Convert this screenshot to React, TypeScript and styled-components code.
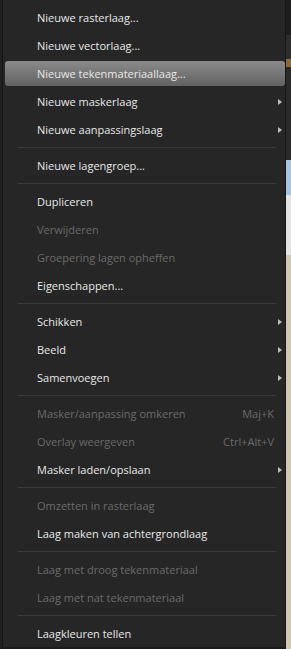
import styled, { createGlobalStyle } from "styled-components";

const Global = createGlobalStyle`
  html, body {
    margin: 0;
    padding: 0;
    background: #1b1b1b;
    overflow: hidden;
  }
`;

type Entry =
  | { kind: "item"; label: string; disabled?: boolean; sub?: boolean; shortcut?: string; active?: boolean }
  | { kind: "sep" };

const entries: Entry[] = [
  { kind: "item", label: "Nieuwe rasterlaag..." },
  { kind: "item", label: "Nieuwe vectorlaag..." },
  { kind: "item", label: "Nieuwe tekenmateriaallaag...", active: true },
  { kind: "item", label: "Nieuwe maskerlaag", sub: true },
  { kind: "item", label: "Nieuwe aanpassingslaag", sub: true },
  { kind: "sep" },
  { kind: "item", label: "Nieuwe lagengroep..." },
  { kind: "sep" },
  { kind: "item", label: "Dupliceren" },
  { kind: "item", label: "Verwijderen", disabled: true },
  { kind: "item", label: "Groepering lagen opheffen", disabled: true },
  { kind: "item", label: "Eigenschappen..." },
  { kind: "sep" },
  { kind: "item", label: "Schikken", sub: true },
  { kind: "item", label: "Beeld", sub: true },
  { kind: "item", label: "Samenvoegen", sub: true },
  { kind: "sep" },
  { kind: "item", label: "Masker/aanpassing omkeren", disabled: true, shortcut: "Maj+K" },
  { kind: "item", label: "Overlay weergeven", disabled: true, shortcut: "Ctrl+Alt+V" },
  { kind: "item", label: "Masker laden/opslaan", sub: true },
  { kind: "sep" },
  { kind: "item", label: "Omzetten in rasterlaag", disabled: true },
  { kind: "item", label: "Laag maken van achtergrondlaag" },
  { kind: "sep" },
  { kind: "item", label: "Laag met droog tekenmateriaal", disabled: true },
  { kind: "item", label: "Laag met nat tekenmateriaal", disabled: true },
  { kind: "sep" },
  { kind: "item", label: "Laagkleuren tellen" },
];

const Screen = styled.div`
  display: flex;
  width: 291px;
  height: 649px;
  background: #1b1b1b;
`;

const LeftEdge = styled.div`
  width: 2px;
  background: #202020;
`;

const Menu = styled.div`
  display: flex;
  flex-direction: column;
  width: 284px;
  height: 647px;
  padding-top: 3px;
  box-sizing: border-box;
  background: #262626;
  border-left: 1px solid #161616;
  border-right: 1px solid #161616;
  font-family: "Open Sans", "Noto Sans", sans-serif;
  font-size: 11px;
`;

const Row = styled.div<{ $disabled?: boolean; $active?: boolean }>`
  display: flex;
  align-items: center;
  flex-shrink: 0;
  height: 25px;
  margin: 2px 0 1px 2px;
  padding: 0 3px 0 32px;
  border-radius: 3px;
  color: ${(p) => (p.$disabled ? "#6a6a6a" : "#e8e8e8")};
  background: ${(p) => (p.$active ? "linear-gradient(#8a8a8a, #626262)" : "transparent")};
`;

const Label = styled.span`
  flex: 1;
  white-space: nowrap;
`;

const Shortcut = styled.span`
  margin-right: 8px;
`;

const Arrow = styled.span`
  width: 0;
  height: 0;
  border-top: 3.5px solid transparent;
  border-bottom: 3.5px solid transparent;
  border-left: 4px solid #bdbdbd;
`;

const Separator = styled.div`
  height: 8px;
  flex-shrink: 0;
  display: flex;
  align-items: center;
  padding: 0 9px 0 15px;
  &::after {
    content: "";
    flex: 1;
    height: 1px;
    background: #3a3a3a;
  }
`;

const RightEdge = styled.div`
  flex: 1;
  display: flex;
  flex-direction: column;
`;

const Strip = styled.div<{ $h: number; $c: string }>`
  height: ${(p) => p.$h}px;
  background: ${(p) => p.$c};
  flex-shrink: 0;
`;

export default function App() {
  return (
    <>
      <Global />
      <Screen>
        <LeftEdge />
        <Menu>
          {entries.map((e, i) =>
            e.kind === "sep" ? (
              <Separator key={i} />
            ) : (
              <Row key={i} $disabled={e.disabled} $active={e.active}>
                <Label>{e.label}</Label>
                {e.shortcut && <Shortcut>{e.shortcut}</Shortcut>}
                {e.sub && <Arrow />}
              </Row>
            )
          )}
        </Menu>
        <RightEdge>
          <Strip $h={35} $c="#1d1d1d" />
          <Strip $h={24} $c="#2e2e2e" />
          <Strip $h={8} $c="#8a6a3a" />
          <Strip $h={93} $c="#2a2a2a" />
          <Strip $h={35} $c="#a9c4e0" />
          <Strip $h={60} $c="#e4e4e4" />
          <Strip $h={394} $c="#cfc9b4" />
        </RightEdge>
      </Screen>
    </>
  );
}
